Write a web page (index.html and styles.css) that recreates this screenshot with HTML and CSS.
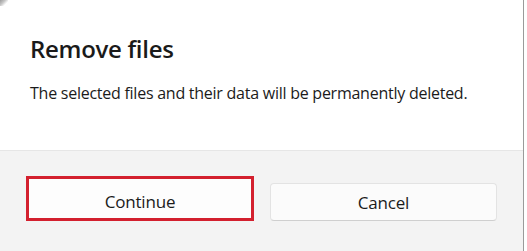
FILE: index.html
```html
<!DOCTYPE html>
<html lang="en">
<head>
<meta charset="utf-8">
<title>Remove files</title>
<link rel="stylesheet" href="styles.css">
</head>
<body>
<div class="dialog">
  <div class="content">
    <h1 class="title">Remove files</h1>
    <p class="message">The selected files and their data will be permanently deleted.</p>
  </div>
  <div class="footer">
    <div class="highlight">
      <button class="btn btn-continue" type="button">Continue</button>
    </div>
    <button class="btn btn-cancel" type="button">Cancel</button>
  </div>
</div>
</body>
</html>
```
FILE: styles.css
```css
html, body {
  margin: 0;
  padding: 0;
  background: #ffffff;
}
body {
  font-family: "Open Sans", "Noto Sans", "Liberation Sans", sans-serif;
  color: #1b1b1b;
  width: 527px;
  height: 251px;
  overflow: hidden;
}
.dialog {
  width: 523px;
  height: 251px;
  border-right: 1px solid #9a9a9a;
  display: flex;
  flex-direction: column;
  position: relative;
}
.dialog::before {
  content: "";
  position: absolute;
  left: 0;
  top: 0;
  width: 8px;
  height: 6px;
  background: linear-gradient(135deg, #9c9c9c 0%, #c8c8c8 40%, rgba(255,255,255,0) 70%);
}
.content {
  height: 150px;
  background: #ffffff;
  padding: 33px 0 0 30px;
  box-sizing: border-box;
}
.title {
  margin: 0;
  font-size: 24px;
  line-height: 32px;
  font-weight: 600;
  letter-spacing: -0.3px;
  color: #1a1a1a;
}
.message {
  margin: 16px 0 0 0;
  font-size: 16px;
  line-height: 24px;
  font-weight: 400;
  letter-spacing: -0.25px;
  color: #1b1b1b;
}
.footer {
  flex: 1;
  background: #f3f3f3;
  border-top: 1px solid #e6e6e6;
  padding: 25px 0 0 26px;
  display: flex;
  align-items: flex-start;
  gap: 16px;
}
.highlight {
  width: 228px;
  height: 45px;
  box-sizing: border-box;
  border: 3px solid #d3202e;
  background: #fdfdfd;
  display: flex;
}
.btn {
  font-family: inherit;
  font-size: 17px;
  letter-spacing: -0.2px;
  color: #1b1b1b;
  padding: 0;
  margin: 0;
  cursor: pointer;
}
.btn-continue {
  flex: 1;
  border: none;
  background: #fdfdfd;
  padding-top: 5px;
}
.btn-cancel {
  margin-top: 7px;
  width: 227px;
  height: 38px;
  background: #fbfbfb;
  border: 1px solid #e3e3e3;
  border-bottom-color: #cfcfcf;
  border-radius: 4px;
}
```
